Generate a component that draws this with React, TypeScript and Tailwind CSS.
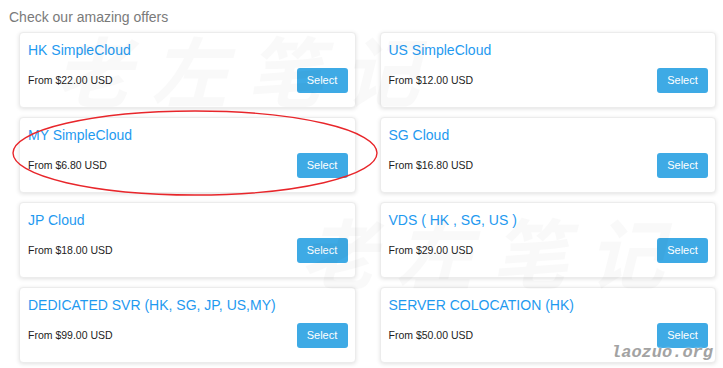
const offers = [
  { name: "HK SimpleCloud", price: "From $22.00 USD" },
  { name: "US SimpleCloud", price: "From $12.00 USD" },
  { name: "MY SimpleCloud", price: "From $6.80 USD" },
  { name: "SG Cloud", price: "From $16.80 USD" },
  { name: "JP Cloud", price: "From $18.00 USD" },
  { name: "VDS ( HK , SG, US )", price: "From $29.00 USD" },
  { name: "DEDICATED SVR (HK, SG, JP, US,MY)", price: "From $99.00 USD" },
  { name: "SERVER COLOCATION (HK)", price: "From $50.00 USD" },
];

const App = () => {
  return (
    <div
      className="relative w-[723px] h-[368px] overflow-hidden bg-white pt-[9px]"
      style={{ fontFamily: '"Liberation Sans", Arial, sans-serif' }}
    >
      {/* Page heading */}
      <h3 className="ml-[9px] text-[14px] leading-[16px] text-[#7a7a7a]">
        Check our amazing offers
      </h3>

      {/* Offer cards */}
      <div className="ml-[19px] mt-[7px] grid w-[697px] grid-cols-2 gap-x-[24px] gap-y-[9px]">
        {offers.map((offer, index) => (
          <div
            key={index}
            className="flex h-[76px] flex-col rounded-[4px] border border-[#ececec] bg-white pl-[8px] pr-[7px] pt-[8px] shadow-[0_1px_4px_rgba(0,0,0,0.12)]"
          >
            <div className="h-[18px] text-[14px] leading-[18px] text-[#1f9af0]">
              {offer.name}
            </div>
            <div className="mt-[9px] flex items-center justify-between">
              <span className="text-[10.5px] text-[#222]">{offer.price}</span>
              <button className="h-[25px] w-[51px] rounded-[3px] bg-[#3eaae5] text-[11px] text-white">
                Select
              </button>
            </div>
          </div>
        ))}
      </div>

      {/* Faint watermark */}
      <div
        className="pointer-events-none absolute left-[55px] top-[30px] flex gap-[20px] text-[76px] font-bold italic leading-[76px] text-black opacity-[0.018]"
        style={{ fontFamily: '"Noto Sans CJK SC", sans-serif' }}
      >
        <span>老</span>
        <span>左</span>
        <span>笔</span>
        <span>记</span>
      </div>
      <div
        className="pointer-events-none absolute left-[300px] top-[212px] flex gap-[20px] text-[76px] font-bold italic leading-[76px] text-black opacity-[0.018]"
        style={{ fontFamily: '"Noto Sans CJK SC", sans-serif' }}
      >
        <span>老</span>
        <span>左</span>
        <span>笔</span>
        <span>记</span>
      </div>

      {/* Red annotation ellipse */}
      <svg
        className="pointer-events-none absolute left-0 top-0"
        width="723"
        height="368"
        viewBox="0 0 723 368"
      >
        <ellipse
          cx="195"
          cy="153"
          rx="182"
          ry="42"
          fill="none"
          stroke="#e8262b"
          strokeWidth="1.4"
        />
      </svg>

      {/* Site mark */}
      <div
        className="pointer-events-none absolute left-[611px] top-[343px] text-[17px] font-bold italic leading-[20px] text-[#a3a3a3]"
        style={{ fontFamily: '"Liberation Mono", monospace', textShadow: "0 0 2px #fff" }}
      >
        laozuo.org
      </div>
    </div>
  );
};

export default App;
